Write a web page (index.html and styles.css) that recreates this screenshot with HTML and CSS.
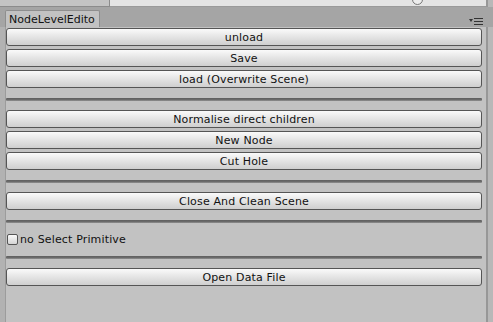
FILE: index.html
```html
<!DOCTYPE html>
<html lang="en">
<head>
  <meta charset="UTF-8">
  <title>NodeLevelEditor</title>
  <link rel="stylesheet" href="styles.css">
</head>
<body>
  <div class="top-strip">
    <div class="top-left"></div>
    <div class="top-right"><span class="knob"></span></div>
    <div class="edge"></div>
  </div>

  <div class="tabbar">
    <div class="tab">NodeLevelEdito</div>
    <svg class="menu" width="14" height="8" viewBox="0 0 14 8">
      <path d="M0 2 L4 2 L2 5 Z" fill="#333"/>
      <rect x="5" y="1" width="9" height="1" fill="#333"/>
      <rect x="5" y="4" width="9" height="1" fill="#333"/>
      <rect x="5" y="7" width="9" height="1" fill="#333"/>
    </svg>
  </div>

  <div class="window">
    <div class="panel">
      <button class="btn">unload</button>
      <button class="btn">Save</button>
      <button class="btn">load (Overwrite Scene)</button>
      <div class="sep"></div>
      <button class="btn">Normalise direct children</button>
      <button class="btn">New Node</button>
      <button class="btn">Cut Hole</button>
      <div class="sep"></div>
      <button class="btn">Close And Clean Scene</button>
      <div class="sep"></div>
      <label class="toggle"><span class="box"></span>no Select Primitive</label>
      <div class="sep"></div>
      <button class="btn">Open Data File</button>
    </div>
    <div class="edge"></div>
  </div>
</body>
</html>
```

FILE: styles.css
```css
html, body {
  margin: 0;
  height: 100%;
}

body {
  font-family: "DejaVu Sans", Verdana, sans-serif;
  font-size: 11px;
  color: #111;
  background: #c2c2c2;
  display: flex;
  flex-direction: column;
  overflow: hidden;
}

/* strip of the panel above */
.top-strip {
  display: flex;
  height: 7px;
  flex: none;
}

.top-left {
  width: 110px;
  background: #c4c4c4;
  border-right: 1px solid #8c8c8c;
  border-bottom: 1px solid #8c8c8c;
  box-sizing: border-box;
}

.top-right {
  flex: 1;
  background: #e4e4e4;
  border-bottom: 1px solid #9a9a9a;
  box-sizing: border-box;
  position: relative;
}

.knob {
  position: absolute;
  left: 302px;
  top: -6px;
  width: 9px;
  height: 9px;
  border: 1px solid #777;
  border-radius: 50%;
  background: #ededed;
}

.edge {
  width: 7px;
  flex: none;
  background: #b8b8b8;
  border-left: 2px solid #979797;
  box-sizing: border-box;
}

.tabbar {
  height: 20px;
  flex: none;
  background: #a5a5a5;
  display: flex;
  align-items: flex-end;
  padding-left: 5px;
  padding-right: 10px;
  justify-content: space-between;
}

.tab {
  height: 17px;
  width: 95px;
  box-sizing: border-box;
  background: #c2c2c2;
  border: 1px solid #8e8e8e;
  border-bottom: none;
  border-radius: 2px 2px 0 0;
  padding: 2px 0 0 3px;
  line-height: 13px;
}

.menu {
  margin-bottom: 2px;
}

.window {
  flex: 1;
  display: flex;
}

.panel {
  flex: 1;
  display: flex;
  flex-direction: column;
  gap: 3px;
  padding: 1px 4px 0 1px;
  border-left: 5px solid #b2b2b2;
  box-shadow: inset 1px 0 0 #9c9c9c;
}

.btn {
  height: 18px;
  box-sizing: border-box;
  margin: 0;
  padding: 0;
  font: inherit;
  letter-spacing: 0.15px;
  color: #111;
  border: 1px solid #555;
  border-radius: 3px;
  background: linear-gradient(#fafafa, #e6e6e6 45%, #cfcfcf);
  line-height: 15px;
  text-align: center;
}

.sep {
  height: 3px;
  margin: 7px 0 6px;
  background: linear-gradient(#5e5e5e, #6e6e6e 66%, #9a9a9a);
  border-radius: 1px;
}

.toggle {
  display: flex;
  align-items: center;
  height: 14px;
  padding-left: 1px;
  gap: 2px;
  letter-spacing: 0.15px;
}

.box {
  width: 11px;
  height: 11px;
  box-sizing: border-box;
  border: 1px solid #555;
  border-radius: 2px;
  background: linear-gradient(#fafafa, #d4d4d4);
}
```
